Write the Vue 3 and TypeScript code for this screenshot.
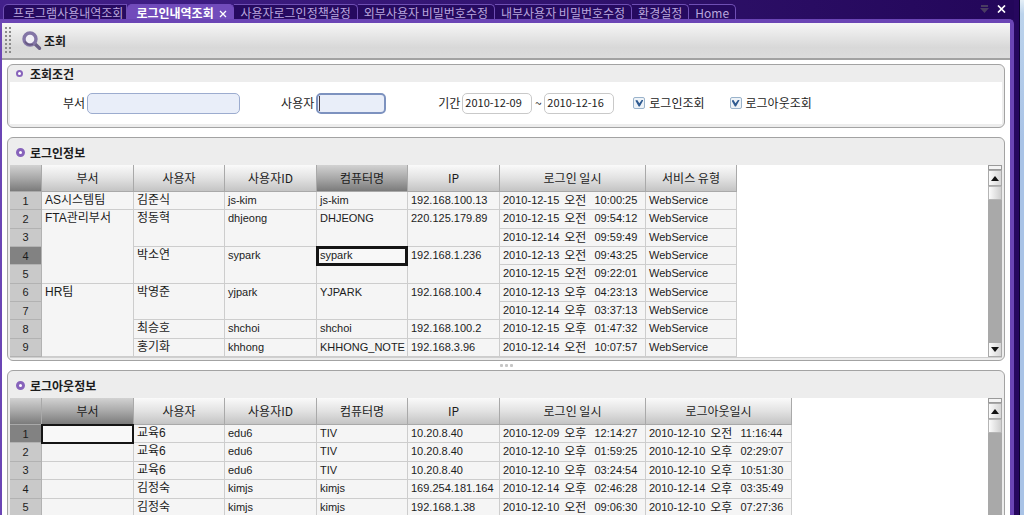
<script setup lang="ts">
import { ref } from 'vue'

interface Cell {
  text: string
  span?: number
  focused?: boolean
}
interface Stamp {
  date: string
  half: string
  time: string
}
interface LoginRow {
  cells: Cell[]
  at: Stamp
  service: string
}
interface LogoutRow {
  cells: Cell[]
  at: Stamp
  out: Stamp
}

const tabs = ['프로그램사용내역조회', '로그인내역조회', '사용자로그인정책설정', '외부사용자 비밀번호수정', '내부사용자 비밀번호수정', '환경설정', 'Home']
const activeTab = ref(1)

const dept = ref('')
const user = ref('')
const from = ref('2010-12-09')
const to = ref('2010-12-16')
const showLogin = ref(true)
const showLogout = ref(true)

const stamp = (value: string): Stamp => {
  const [date, half, time] = value.split(' ')
  return { date, half, time }
}
const person = (span: number, name: string, id: string, host: string, ip: string, focused = false): Cell[] => [
  { text: name, span },
  { text: id, span },
  { text: host, span, focused },
  { text: ip, span },
]
const login = (cells: Cell[], at: string): LoginRow => ({ cells, at: stamp(at), service: 'WebService' })
const logout = (cells: Cell[], at: string, out: string): LogoutRow => ({ cells, at: stamp(at), out: stamp(out) })

const loginHeads = ['부서', '사용자', '사용자ID', '컴퓨터명', 'IP', '로그인 일시', '서비스 유형']
const logoutHeads = ['부서', '사용자', '사용자ID', '컴퓨터명', 'IP', '로그인 일시', '로그아웃일시']

const loginRows: LoginRow[] = [
  login([{ text: 'AS시스템팀' }, ...person(1, '김준식', 'js-kim', 'js-kim', '192.168.100.13')], '2010-12-15 오전 10:00:25'),
  login([{ text: 'FTA관리부서', span: 4 }, ...person(2, '정동혁', 'dhjeong', 'DHJEONG', '220.125.179.89')], '2010-12-15 오전 09:54:12'),
  login([], '2010-12-14 오전 09:59:49'),
  login(person(2, '박소연', 'sypark', 'sypark', '192.168.1.236', true), '2010-12-13 오전 09:43:25'),
  login([], '2010-12-15 오전 09:22:01'),
  login([{ text: 'HR팀', span: 4 }, ...person(2, '박영준', 'yjpark', 'YJPARK', '192.168.100.4')], '2010-12-13 오후 04:23:13'),
  login([], '2010-12-14 오후 03:37:13'),
  login(person(1, '최승호', 'shchoi', 'shchoi', '192.168.100.2'), '2010-12-15 오후 01:47:32'),
  login(person(1, '홍기화', 'khhong', 'KHHONG_NOTE', '192.168.3.96'), '2010-12-14 오전 10:07:57'),
]

const logoutRows: LogoutRow[] = [
  logout([{ text: '', focused: true }, ...person(1, '교육6', 'edu6', 'TIV', '10.20.8.40')], '2010-12-09 오후 12:14:27', '2010-12-10 오전 11:16:44'),
  logout([{ text: '' }, ...person(1, '교육6', 'edu6', 'TIV', '10.20.8.40')], '2010-12-10 오후 01:59:25', '2010-12-10 오후 02:29:07'),
  logout([{ text: '' }, ...person(1, '교육6', 'edu6', 'TIV', '10.20.8.40')], '2010-12-10 오후 03:24:54', '2010-12-10 오후 10:51:30'),
  logout([{ text: '' }, ...person(1, '김정숙', 'kimjs', 'kimjs', '169.254.181.164')], '2010-12-14 오후 02:46:28', '2010-12-14 오후 03:35:49'),
  logout([{ text: '' }, ...person(1, '김정숙', 'kimjs', 'kimjs', '192.168.1.38')], '2010-12-10 오전 09:06:30', '2010-12-10 오후 07:27:36'),
]

const isHangul = (text: string) => /[가-힣]/.test(text)
</script>

<template>
  <div class="window">
    <div class="frame">
      <header class="tabbar">
        <nav class="tabs">
          <button
            v-for="(tab, i) in tabs"
            :key="tab"
            type="button"
            class="tab"
            :class="{ active: i === activeTab }"
            @click="activeTab = i"
          >
            {{ tab }}
            <svg v-if="i === activeTab" class="tab-x" viewBox="0 0 8 8"><path d="M1 1l6 6M7 1L1 7" /></svg>
          </button>
        </nav>
        <div class="window-tools">
          <button type="button" class="tool" aria-label="탭 목록">
            <svg viewBox="0 0 9 8"><path d="M1 0h7v2H1zM0 3h9L4.500 8z" fill="#4a3c62" /></svg>
          </button>
          <button type="button" class="tool" aria-label="닫기">
            <svg viewBox="0 0 9 8"><path d="M1 .5l7 7M8 .5l-7 7" stroke="#fff" stroke-width="1.7" fill="none" /></svg>
          </button>
        </div>
      </header>

      <div class="body">
        <div class="toolbar">
          <span class="grip"></span>
          <button type="button" class="search">
            <svg viewBox="0 0 20 20">
              <path d="M12.500 12.500l5 4.800" stroke="#6a5f86" stroke-width="3.400" stroke-linecap="round" />
              <circle cx="8" cy="8" r="6" fill="#f1eff6" stroke="#8375a6" stroke-width="3.400" />
              <path d="M3 10.500a6 6 0 0 0 8 2.600" fill="none" stroke="#65587f" stroke-width="1.500" />
            </svg>
            조회
          </button>
        </div>

        <main class="content">
          <section class="panel filter">
            <h2 class="title short"><i class="ring"></i>조회조건</h2>
            <form class="fields" @submit.prevent>
              <div class="field dept">
                <label for="dept">부서</label>
                <input id="dept" v-model="dept" type="text" />
              </div>
              <div class="field user">
                <label for="user">사용자</label>
                <input id="user" v-model="user" type="text" /><span class="caret"></span>
              </div>
              <div class="field period">
                <label for="from">기간</label>
                <input id="from" v-model="from" type="text" />
                <span class="tilde">~</span>
                <input id="to" v-model="to" type="text" aria-label="종료일" />
              </div>
              <label class="check"><input v-model="showLogin" type="checkbox" />로그인조회</label>
              <label class="check"><input v-model="showLogout" type="checkbox" />로그아웃조회</label>
            </form>
          </section>

          <section class="panel grid-panel">
            <h2 class="title"><i class="ring"></i>로그인정보</h2>
            <div class="grid">
              <table class="login">
                <colgroup>
                  <col class="c-num" /><col class="c-a" /><col class="c-b" /><col class="c-a" /><col class="c-b" /><col class="c-a" /><col class="c-date" /><col class="c-b" />
                </colgroup>
                <thead>
                  <tr>
                    <th class="corner"></th>
                    <th v-for="(h, i) in loginHeads" :key="h" :class="{ hot: i === 3 }">{{ h }}</th>
                  </tr>
                </thead>
                <tbody>
                  <tr v-for="(row, r) in loginRows" :key="r">
                    <th class="num" :class="{ hot: r === 3 }">{{ r + 1 }}</th>
                    <td v-for="(c, i) in row.cells" :key="i" :rowspan="c.span" :class="{ ko: isHangul(c.text), focused: c.focused }">
                      <span v-if="c.focused" class="focus">{{ c.text }}</span>
                      <template v-else>{{ c.text }}</template>
                    </td>
                    <td>{{ row.at.date }} <span class="half">{{ row.at.half }}</span> {{ row.at.time }}</td>
                    <td>{{ row.service }}</td>
                  </tr>
                </tbody>
              </table>
              <div class="scroll">
                <button type="button" class="split" aria-label="분할"></button>
                <button type="button" class="arrow" aria-label="위로"><i class="up"></i></button>
                <span class="thumb"></span>
                <button type="button" class="arrow last" aria-label="아래로"><i class="down"></i></button>
              </div>
            </div>
          </section>

          <div class="splitter"><i></i><i></i><i></i></div>

          <section class="panel grid-panel">
            <h2 class="title"><i class="ring"></i>로그아웃정보</h2>
            <div class="grid">
              <table class="logout">
                <colgroup>
                  <col class="c-num" /><col class="c-a" /><col class="c-b" /><col class="c-a" /><col class="c-b" /><col class="c-a" /><col class="c-date" /><col class="c-date" />
                </colgroup>
                <thead>
                  <tr>
                    <th class="corner"></th>
                    <th v-for="(h, i) in logoutHeads" :key="h" :class="{ hot: i === 0 }">{{ h }}</th>
                  </tr>
                </thead>
                <tbody>
                  <tr v-for="(row, r) in logoutRows" :key="r">
                    <th class="num" :class="{ hot: r === 0 }">{{ r + 1 }}</th>
                    <td v-for="(c, i) in row.cells" :key="i" :class="{ ko: isHangul(c.text), focused: c.focused }">
                      <span v-if="c.focused" class="focus">{{ c.text }}</span>
                      <template v-else>{{ c.text }}</template>
                    </td>
                    <td>{{ row.at.date }} <span class="half">{{ row.at.half }}</span> {{ row.at.time }}</td>
                    <td>{{ row.out.date }} <span class="half">{{ row.out.half }}</span> {{ row.out.time }}</td>
                  </tr>
                </tbody>
              </table>
              <div class="scroll">
                <button type="button" class="split" aria-label="분할"></button>
                <button type="button" class="arrow" aria-label="위로"><i class="up"></i></button>
                <span class="thumb"></span>
              </div>
            </div>
          </section>
        </main>
      </div>
    </div>
  </div>
</template>

<style>
body {
  overflow: hidden;
}
</style>

<style scoped>
.window {
  box-sizing: border-box;
  height: 100vh;
  overflow: hidden;
  padding-right: 4px;
  background: linear-gradient(#e4eef6, #bcd3ec 14px, #a9c3e6 140px);
  color: #1c1c1c;
  font: 12px/16px "Noto Sans CJK KR", sans-serif;
}
.window *,
.window *::before {
  box-sizing: border-box;
}
button {
  margin: 0;
  padding: 0;
  border: 0;
  background: none;
  color: inherit;
  font: inherit;
}
.frame {
  display: flex;
  flex-direction: column;
  height: 100%;
  padding-right: 5px;
  border-right: 1px solid #0c0330;
  background: #26075e;
}
.tabbar {
  display: flex;
  flex: none;
  justify-content: space-between;
  height: 19px;
  padding: 4px 0 0 3px;
  background: linear-gradient(90deg, #42208a, #2c0f66 70%, #23065a);
}
.tabs {
  display: flex;
}
.tab {
  height: 15px;
  padding: 0 6px;
  border: 1px solid #6f4fb4;
  border-bottom: 0;
  border-left-width: 0;
  border-radius: 0 5px 0 0;
  background: #260a60;
  color: #b9a6de;
  line-height: 15px;
  white-space: nowrap;
}
.tab:first-child {
  padding: 0 3px 0 9px;
  border-left-width: 1px;
  border-radius: 5px 0 0 0;
}
.tab.active {
  padding: 0 6px 0 9px;
  border-color: #714bbb;
  border-radius: 5px 5px 0 0;
  background: #714bbb;
  color: #fff;
  font-weight: 700;
}
.tab-x {
  width: 8px;
  height: 8px;
  margin-left: 3px;
  fill: none;
  stroke: #fff;
  stroke-width: 1.3;
}
.window-tools {
  display: flex;
  gap: 8px;
  padding-right: 8px;
}
.tool {
  width: 9px;
  height: 9px;
}
.tool svg {
  display: block;
  width: 9px;
  height: 8px;
}
.body {
  display: flex;
  flex: 1;
  flex-direction: column;
  min-height: 0;
  border: solid #6b45b5;
  border-width: 4px 4px 0 2px;
  border-top-right-radius: 5px;
  background: #fff;
}
.toolbar {
  display: flex;
  flex: none;
  align-items: center;
  height: 37px;
  padding-left: 3px;
  border-bottom: 2px solid #a2a2a2;
  background: linear-gradient(#f6f6f6, #d8d8d8 70%, #dcdcdc);
}
.grip {
  width: 6px;
  height: 28px;
  background: radial-gradient(circle at 1px 1px, #8b8b8b 1px, transparent 1px) 0 0 / 4px 4px;
}
.search {
  display: flex;
  align-items: center;
  gap: 2px;
  margin-left: 11px;
  font-weight: 700;
}
.search svg {
  width: 20px;
  height: 20px;
  fill: none;
}
.content {
  display: flex;
  flex: 1;
  flex-direction: column;
  min-height: 0;
  padding: 4px 5px 0;
}
.panel {
  flex: none;
  padding: 0 2px 3px;
  border: 1px solid #a3a3a3;
  border-radius: 6px;
  background: #ededed;
}
.title {
  display: flex;
  align-items: center;
  height: 27px;
  margin: 0;
  padding: 2px 0 0 6px;
  font-size: 12px;
  font-weight: 700;
  line-height: 16px;
}
.title.short {
  height: 17px;
  padding-top: 0;
}
.ring {
  width: 9px;
  height: 9px;
  margin-right: 5px;
  border: 3px solid #8763bb;
  border-radius: 50%;
  background: #fff;
}
.filter {
  margin-bottom: 9px;
}
.short .ring {
  width: 7px;
  height: 7px;
  margin-right: 7px;
  border-width: 2px;
}
.fields {
  display: flex;
  align-items: center;
  height: 42px;
  padding-left: 53px;
  background: #fff;
}
.field {
  display: flex;
  align-items: center;
  gap: 2px;
}
.field input {
  width: 70px;
  height: 21px;
  padding: 0 0 2px 2px;
  border: 1px solid #c9c9c9;
  border-radius: 5px;
  outline: none;
  background: #fff;
  color: #1c1c1c;
  font: 11px/16px "Noto Sans CJK KR", sans-serif;
}
.field.dept input {
  width: 153px;
  border-color: #9caccf;
  background: #e9eef9;
}
.field.user {
  position: relative;
  margin-left: 41px;
}
.field.user input {
  border: 2px solid #7d92bf;
  background: #e9eef9;
}
.caret {
  position: absolute;
  right: 66px;
  width: 1px;
  height: 15px;
  background: #4b3a3a;
}
.field.period {
  margin-left: 52px;
}
.tilde {
  width: 8px;
  text-align: center;
}
.check {
  display: flex;
  align-items: center;
  gap: 4px;
  margin-left: 19px;
}
.check + .check {
  margin-left: 25px;
}
.check input {
  appearance: none;
  display: grid;
  place-items: center;
  width: 12px;
  height: 12px;
  margin: 0;
  border: 1px solid #9ab3cb;
  border-radius: 2px;
  background: #eef3f8;
}
.check input:checked::before {
  width: 8px;
  height: 7px;
  background: #2f5b91;
  clip-path: polygon(0 14%, 24% 8%, 50% 55%, 84% 0, 100% 10%, 56% 100%, 42% 100%);
  content: "";
}
.grid-panel {
  padding-bottom: 2px;
}
.grid {
  display: flex;
  justify-content: space-between;
  border-bottom: 1px solid #cfcfcf;
  background: #fff;
}
table {
  flex: none;
  width: 727px;
  border-spacing: 0;
  table-layout: fixed;
}
.login {
  height: 192px;
}
.logout {
  width: 782px;
  height: 119px;
}
.c-num {
  width: 32px;
}
.c-a {
  width: 92px;
}
.c-b {
  width: 91px;
}
.c-date {
  width: 146px;
}
th,
td {
  padding: 0;
  overflow: hidden;
  border: solid #cdcdcd;
  border-width: 0 1px 1px 0;
  white-space: nowrap;
}
thead th {
  height: 27px;
  border-color: #a9a9a9;
  background: linear-gradient(#fafafa, #e2e2e2 50%, #c4c4c4);
  font-weight: 400;
  line-height: 16px;
}
thead .corner,
thead .hot {
  background: linear-gradient(#d2d2d2, #a9a9a9 50%, #7b7b7b);
}
.num {
  background: #c9c9c9;
  border-color: #b2b2b2;
  font: 11px/16px "Liberation Sans", sans-serif;
}
.num.hot {
  background: #828282;
}
td {
  padding-left: 3px;
  background: #f5f5f5;
  color: #1c1c1c;
  font: 11px/16px "Liberation Sans", "Noto Sans CJK KR", sans-serif;
  vertical-align: top;
}
td.ko,
.half {
  font-size: 12px;
}
.half {
  margin: 0 5px 0 2px;
  line-height: 12px;
  vertical-align: middle;
}
td.focused {
  position: relative;
  overflow: visible;
}
.focus {
  position: absolute;
  z-index: 1;
  top: -1px;
  right: -1px;
  left: -1px;
  height: 20px;
  padding-left: 1px;
  border: 3px solid #151515;
  background: #f8f8f8;
  line-height: 13px;
}
.logout .focus {
  border-width: 2px;
}
.scroll {
  display: flex;
  flex-direction: column;
  width: 14px;
  background: #a9a9a9;
}
.split {
  height: 5px;
  border: 1px solid #9a9a9a;
  background: #f4f4f4;
}
.arrow {
  display: grid;
  place-items: center;
  height: 16px;
  border: 1px solid #a9a9a9;
  background: linear-gradient(90deg, #fafafa, #d6d6d6);
}
.arrow.last {
  height: 15px;
  margin-top: auto;
}
.up,
.down {
  width: 0;
  height: 0;
  border: solid transparent;
  border-width: 0 4px;
}
.up {
  border-bottom: 5px solid #111;
}
.down {
  border-top: 5px solid #111;
}
.thumb {
  height: 14px;
  border: 1px solid #b5b5b5;
  background: linear-gradient(90deg, #fbfbfb, #cfcfcf);
}
.splitter {
  display: flex;
  flex: none;
  align-items: center;
  justify-content: center;
  gap: 2px;
  height: 9px;
}
.splitter i {
  width: 3px;
  height: 3px;
  border-radius: 1px;
  background: #c6c6c6;
}
</style>
